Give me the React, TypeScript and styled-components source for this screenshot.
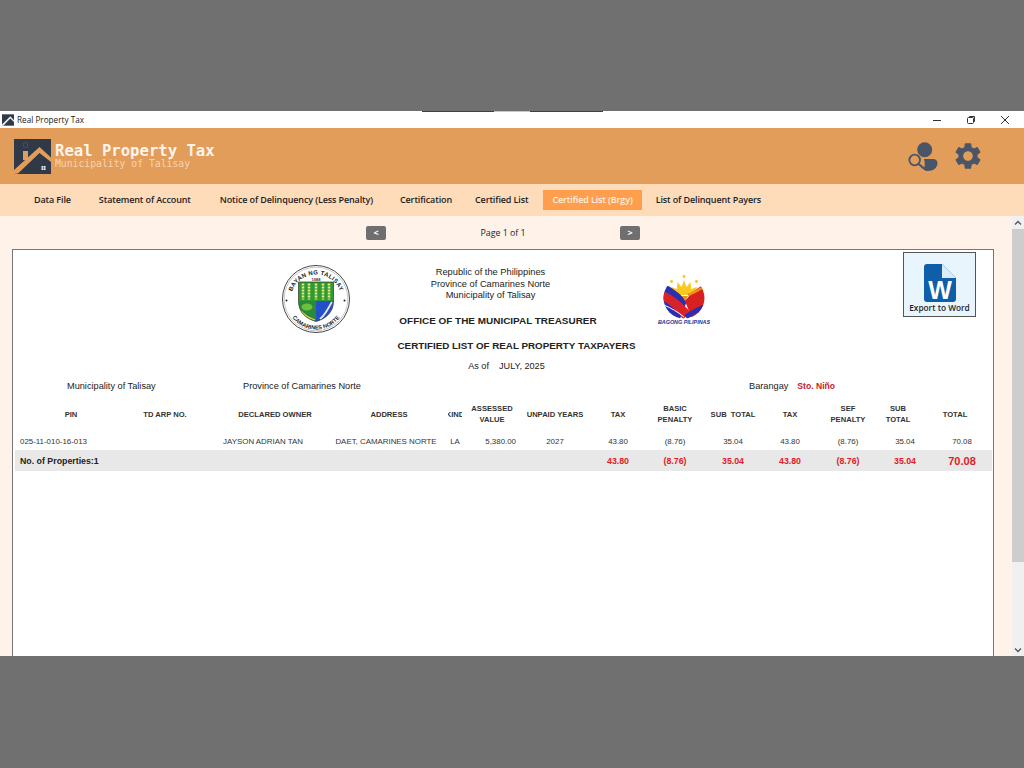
import React from 'react';
import styled, { createGlobalStyle } from 'styled-components';
import { MdSettings } from 'react-icons/md';

const GlobalStyle = createGlobalStyle`
  html, body {
    margin: 0;
    padding: 0;
    background: #707070;
    overflow: hidden;
  }
  * {
    box-sizing: border-box;
  }
`;

const Page = styled.div`
  width: 1024px;
  height: 768px;
  padding-top: 111px;
  background: #707070;
  font-family: "Liberation Sans", Arial, sans-serif;
`;

const AppWindow = styled.div`
  position: relative;
  width: 1024px;
  height: 545px;
  display: flex;
  flex-direction: column;
  overflow: hidden;
`;

const TitleBar = styled.div`
  height: 17px;
  flex: none;
  background: #ffffff;
  display: flex;
  align-items: center;
  padding-left: 2px;
  gap: 3px;
  font-family: "Open Sans", sans-serif;
  font-size: 8.2px;
  color: #222222;
`;

const TitleText = styled.span`
  flex: 1;
`;

const WindowButton = styled.div`
  width: 34px;
  height: 17px;
  display: flex;
  align-items: center;
  justify-content: center;
`;

const TitleControls = styled.div`
  display: flex;
  padding-right: 2px;
`;

const TaskStrip = styled.div`
  position: absolute;
  top: 0;
  left: 422px;
  display: flex;
  height: 1px;
`;

const TaskPiece = styled.div<{ $w: number; $c: string }>`
  width: ${p => p.$w}px;
  background: ${p => p.$c};
`;

const Banner = styled.header`
  height: 56px;
  flex: none;
  background: #e39d5b;
  display: flex;
  align-items: center;
  padding: 0 43px 0 14px;
`;

const BrandText = styled.div`
  margin-left: 4px;
  flex: 1;
  font-family: "DejaVu Sans Mono", monospace;
`;

const BrandTitle = styled.div`
  font-size: 15.6px;
  line-height: 15px;
  font-weight: 700;
  color: #fff4ea;
`;

const BrandSub = styled.div`
  font-size: 9.75px;
  line-height: 9px;
  color: #f7d4b0;
`;

const BannerIcons = styled.div`
  display: flex;
  align-items: center;
  gap: 16px;
  color: #4a5568;
`;

const GearIcon = styled(MdSettings)`
  margin: 0 -3px;
`;

const TabBar = styled.nav`
  height: 32px;
  flex: none;
  background: #fedbb9;
  display: flex;
  align-items: center;
  padding-left: 26px;
`;

const Tab = styled.div<{ $active?: boolean; $gap: number }>`
  height: 20px;
  padding: 0 ${p => (p.$active ? 9 : 8)}px 2px;
  margin-right: ${p => p.$gap}px;
  display: flex;
  align-items: center;
  font-family: "Open Sans", sans-serif;
  font-size: 9px;
  font-weight: 600;
  letter-spacing: -0.12px;
  white-space: nowrap;
  color: ${p => (p.$active ? '#fff1e0' : '#1d1d1d')};
  background: ${p => (p.$active ? '#ff9f4d' : 'transparent')};
`;

const Body = styled.div`
  flex: 1;
  min-height: 0;
  display: flex;
  background: #fff3e9;
`;

const Main = styled.main`
  flex: 1;
  min-width: 0;
  overflow: hidden;
`;

const Pager = styled.div`
  height: 33px;
  display: grid;
  grid-template-columns: 366px 20px 234px 20px;
  align-items: center;
  font-family: "Open Sans", sans-serif;
  font-size: 8.8px;
  color: #222222;
`;

const PagerLabel = styled.div`
  text-align: center;
`;

const PagerButton = styled.div<{ $column: number }>`
  grid-column: ${p => p.$column};
  height: 14px;
  border-radius: 2px;
  background: #6f6f6f;
  color: #ffffff;
  font-size: 9px;
  font-weight: 700;
  display: flex;
  align-items: center;
  justify-content: center;
`;

const Sheet = styled.section`
  position: relative;
  width: 982px;
  height: 600px;
  margin-left: 12px;
  background: #ffffff;
  border: 1px solid #777777;
  padding-left: 2px;
  color: #222222;
`;

const ExportButton = styled.div`
  position: absolute;
  left: 890px;
  top: 2px;
  width: 73px;
  height: 65px;
  background: #e9f5fd;
  border: 1px solid #555555;
  display: flex;
  flex-direction: column;
  align-items: center;
  padding-top: 11px;
  font-family: "Open Sans", sans-serif;
  font-size: 8.3px;
  font-weight: 600;
  line-height: 11px;
  color: #1d1d1d;
  white-space: nowrap;
`;

const Letterhead = styled.div`
  display: flex;
  padding: 14px 0 0 266px;
  height: 90px;
`;

const SealBox = styled.div`
  width: 70px;
  flex: none;
`;

const HeadLines = styled.div`
  width: 279px;
  flex: none;
  padding-top: 3px;
  text-align: center;
  font-size: 9.3px;
  line-height: 11.5px;
`;

const OfficeTitle = styled.div`
  margin-top: 13px;
  padding-left: 15px;
  font-size: 9.95px;
  font-weight: 700;
  white-space: nowrap;
`;

const BagongBox = styled.div`
  margin: 10px 0 0 28px;
`;

const ReportTitle = styled.div`
  margin-top: -1px;
  height: 14px;
  padding-left: 25px;
  text-align: center;
  font-size: 9.8px;
  line-height: 14px;
  font-weight: 700;
`;

const AsOf = styled.div`
  margin-top: 6px;
  height: 14px;
  padding-left: 5px;
  text-align: center;
  font-size: 9.1px;
  line-height: 14px;
  white-space: pre;
`;

const PlaceRow = styled.div`
  margin-top: 6px;
  height: 14px;
  display: grid;
  grid-template-columns: 176px 506px auto;
  padding-left: 52px;
  font-size: 9.2px;
  line-height: 14px;
`;

const BarangayName = styled.span`
  margin-left: 9px;
  color: #c8202c;
  font-size: 8.6px;
  font-weight: 700;
`;

const HeaderRow = styled.div`
  margin-top: 6px;
  height: 30px;
  display: grid;
  grid-template-columns: 102px 86px 134px 94px 38px 36px 90px 36px 78px 38px 76px 40px 60px 54px;
  padding-left: 5px;
`;

const HeaderCell = styled.div`
  display: flex;
  align-items: center;
  justify-content: center;
  min-width: 0;
  text-align: center;
  white-space: nowrap;
  font-size: 7.6px;
  line-height: 11px;
  font-weight: 700;
  color: #333333;
`;

const KindClip = styled.div`
  width: 14px;
  flex: none;
  overflow: hidden;
  display: flex;
  justify-content: center;
`;

const dataColumns = '102px 81px 120px 126px 12px 59px 70px 56px 58px 58px 56px 60px 54px 60px';

const DataRow = styled.div`
  margin-top: 6px;
  height: 13px;
  display: grid;
  grid-template-columns: ${dataColumns};
  padding-left: 5px;
  align-items: center;
  font-size: 7.9px;
  color: #333333;
  white-space: nowrap;
`;

const TotalRow = styled.div`
  margin-top: 2px;
  height: 21px;
  width: 977px;
  display: grid;
  grid-template-columns: ${dataColumns};
  padding-left: 5px;
  align-items: center;
  background: #e8e8e8;
  font-size: 8.8px;
  font-weight: 700;
  white-space: nowrap;
`;

const Cell = styled.div<{ $align?: 'left' | 'right' | 'center'; $red?: boolean; $big?: boolean }>`
  display: flex;
  min-width: 0;
  justify-content: ${p => (p.$align === 'left' ? 'flex-start' : p.$align === 'right' ? 'flex-end' : 'center')};
  padding-right: ${p => (p.$align === 'right' ? '4px' : '0')};
  color: ${p => (p.$red ? '#e01b24' : 'inherit')};
  font-size: ${p => (p.$big ? '11px' : 'inherit')};
`;

const ScrollTrack = styled.div`
  width: 12px;
  flex: none;
  background: #f0f0f0;
  display: flex;
  flex-direction: column;
`;

const ScrollArrow = styled.div`
  height: 13px;
  flex: none;
  display: flex;
  align-items: center;
  justify-content: center;
`;

const ScrollThumb = styled.div`
  height: 333px;
  flex: none;
  background: #cdcdcd;
  margin-bottom: auto;
`;

const LogoIcon = () => (
  <svg width="37" height="35" viewBox="0 0 37 35">
    <rect width="37" height="35" fill="#2f3947" />
    <polygon points="0,31 25.5,8 37,18.5 37,23 25.5,14 4,34.5 0,35" fill="#e39d5b" />
    <rect x="9" y="12" width="5" height="9" fill="#e39d5b" />
    <circle cx="11.5" cy="6" r="2.5" fill="none" stroke="#4b5563" strokeWidth="0.8" />
    <rect x="27.5" y="27" width="4" height="4" fill="#f4f4f4" />
    <path d="M29.5 27v4M27.5 29h4" stroke="#2f3947" strokeWidth="0.5" />
  </svg>
);

const TitleIcon = () => (
  <svg width="12" height="12" viewBox="0 0 37 35">
    <rect width="37" height="35" fill="#2f3947" />
    <polygon points="0,31 25.5,6 37,18 37,24 25.5,13 4,35 0,35" fill="#f0f0f0" />
  </svg>
);

const UserSearchIcon = () => (
  <svg width="32" height="31" viewBox="0 0 32 31">
    <circle cx="17.7" cy="8.7" r="7.5" fill="#4a5568" />
    <path d="M17 18h9c3 0 4.5 2 4.5 4 0 5-4.5 8-9.5 8-2 0-3-.5-4-1.5 1-4 1-7 0-10.5z" fill="#4a5568" />
    <circle cx="7.7" cy="19" r="5.3" fill="none" stroke="#4a5568" strokeWidth="1.8" />
    <path d="M11.7 23l5.5 4.7" stroke="#4a5568" strokeWidth="2.2" strokeLinecap="round" />
  </svg>
);

const WordIcon = () => (
  <svg width="32" height="38" viewBox="0 0 32 38">
    <path d="M3 0h15l14 14v21a3 3 0 0 1-3 3H3a3 3 0 0 1-3-3V3a3 3 0 0 1 3-3z" fill="#0f5fa8" />
    <path d="M18 0l14 14H18z" fill="#dcebf7" />
    <text x="16" y="35" textAnchor="middle" fontFamily="Liberation Sans, sans-serif" fontWeight="700" fontSize="25" fill="#ffffff">W</text>
  </svg>
);

const TalisaySeal = () => (
  <svg width="70" height="70" viewBox="0 0 70 70">
    <defs>
      <path id="sealTop" d="M9.5 36a25.5 25.5 0 0 1 51 0" />
      <path id="sealBottom" d="M5.5 36a29.5 29.5 0 0 0 59 0" />
    </defs>
    <circle cx="35" cy="35" r="33.5" fill="#fff" stroke="#333" strokeWidth="0.9" />
    <circle cx="35" cy="35" r="31.8" fill="none" stroke="#777" strokeWidth="0.4" />
    <text fontFamily="Liberation Sans, sans-serif" fontWeight="700" fontSize="6" letterSpacing="0.3" fill="#222">
      <textPath href="#sealTop" startOffset="50%" textAnchor="middle">BAYAN NG TALISAY</textPath>
    </text>
    <text fontFamily="Liberation Sans, sans-serif" fontWeight="700" fontSize="5.6" fill="#222">
      <textPath href="#sealBottom" startOffset="50%" textAnchor="middle">CAMARINES NORTE</textPath>
    </text>
    <circle cx="5.5" cy="36.5" r="1" fill="#222" />
    <circle cx="63.5" cy="36.5" r="1" fill="#222" />
    <text x="35" y="16.5" textAnchor="middle" fontFamily="Liberation Sans, sans-serif" fontWeight="700" fontSize="4" fill="#333">1988</text>
    <path d="M17.5 18h35v19h-35z" fill="#2f9a35" />
    <path d="M22 19.5v16M28 19.5v16M35 19.5v16M42 19.5v16M48 19.5v16" stroke="#e4e97a" strokeWidth="2.6" strokeDasharray="2 1" />
    <path d="M17.5 37H35v20.5C26 55 17.5 49 17.5 37z" fill="#2a8a3a" />
    <path d="M35 37h17.5c0 12-8.5 18-17.5 20.5z" fill="#2350c8" />
    <ellipse cx="26" cy="43" rx="5.5" ry="3.5" fill="#6fbf3f" />
    <path d="M39 55c6-5 8-11 12-17" stroke="#e6e6e6" strokeWidth="1.8" fill="none" />
    <path d="M20 47c3 4 8 7 14 9" stroke="#e2d94a" strokeWidth="1.3" fill="none" />
    <path d="M17.5 18h35v19c0 12-8.5 18-17.5 20.5C26 55 17.5 49 17.5 37z" fill="none" stroke="#333" strokeWidth="0.7" />
  </svg>
);

const BagongLogo = () => (
  <svg width="54" height="52" viewBox="0 0 54 52">
    <defs>
      <clipPath id="bpDisc">
        <circle cx="26" cy="24" r="20.5" />
      </clipPath>
    </defs>
    <g fill="#f5c518">
      <circle cx="26" cy="2.5" r="1.4" />
      <circle cx="13.5" cy="7.5" r="1.4" />
      <circle cx="38.5" cy="7.5" r="1.4" />
    </g>
    <path d="M26 6l2.5 7 4-5 .5 7 6-2-3 8H16l-3-8 6 2 .5-7 4 5z" fill="#f8c91e" />
    <g clipPath="url(#bpDisc)">
      <path d="M5 10c8 2 17 10 24 17l-7 18H5z" fill="#2a2fb0" />
      <path d="M47 10c-8 4-14 9-20 17l7 18h13z" fill="#d92020" />
      <path d="M5 17c10 4 20 12 28 22l-8 6C18 36 12 30 5 27z" fill="#d8232a" />
      <path d="M6 31c7 3 14 7 20 12" stroke="#ffffff" strokeWidth="1" fill="none" />
      <path d="M28 43c6-4 12-8 19-10" stroke="#2a2fb0" strokeWidth="5" fill="none" />
      <path d="M24 22h6l-3 5z" fill="#f28c1a" />
      <path d="M30 21c5-2 10-5 16-8" stroke="#f28c1a" strokeWidth="2.5" fill="none" />
    </g>
    <text x="26" y="49.5" textAnchor="middle" fontFamily="Liberation Sans, sans-serif" fontWeight="700" fontStyle="italic" fontSize="5.4" fill="#23308f">BAGONG PILIPINAS</text>
  </svg>
);

const tabs = [
  { label: 'Data File', gap: 12 },
  { label: 'Statement of Account', gap: 13 },
  { label: 'Notice of Delinquency (Less Penalty)', gap: 11 },
  { label: 'Certification', gap: 7 },
  { label: 'Certified List', gap: 7 },
  { label: 'Certified List (Brgy)', gap: 6, active: true },
  { label: 'List of Delinquent Payers', gap: 0 },
];

const amounts = ['43.80', '(8.76)', '35.04', '43.80', '(8.76)', '35.04', '70.08'];

export default function App() {
  return (
    <Page>
      <GlobalStyle />
      <AppWindow>
        <TaskStrip>
          <TaskPiece $w={72} $c="#3f3f3f" />
          <TaskPiece $w={36} $c="#9fd3f0" />
          <TaskPiece $w={73} $c="#3f3f3f" />
        </TaskStrip>
        <TitleBar>
          <TitleIcon />
          <TitleText>Real Property Tax</TitleText>
          <TitleControls>
            <WindowButton>
              <svg width="10" height="10" viewBox="0 0 10 10"><path d="M1 5.5h8" stroke="#333" /></svg>
            </WindowButton>
            <WindowButton>
              <svg width="10" height="10" viewBox="0 0 10 10">
                <rect x="1.5" y="2.5" width="6" height="6" rx="1" fill="none" stroke="#333" />
                <path d="M3.5 2.5V1.5h5v5H7.5" fill="none" stroke="#333" />
              </svg>
            </WindowButton>
            <WindowButton>
              <svg width="10" height="10" viewBox="0 0 10 10"><path d="M1 1l8 8M9 1l-8 8" stroke="#333" /></svg>
            </WindowButton>
          </TitleControls>
        </TitleBar>

        <Banner>
          <LogoIcon />
          <BrandText>
            <BrandTitle>Real Property Tax</BrandTitle>
            <BrandSub>Municipality of Talisay</BrandSub>
          </BrandText>
          <BannerIcons>
            <UserSearchIcon />
            <GearIcon size={32} />
          </BannerIcons>
        </Banner>

        <TabBar>
          {tabs.map(t => (
            <Tab key={t.label} $active={t.active} $gap={t.gap}>{t.label}</Tab>
          ))}
        </TabBar>

        <Body>
          <Main>
            <Pager>
              <PagerButton $column={2}>&lt;</PagerButton>
              <PagerLabel>Page 1 of 1</PagerLabel>
              <PagerButton $column={4}>&gt;</PagerButton>
            </Pager>
            <Sheet>
              <ExportButton>
                <WordIcon />
                Export to Word
              </ExportButton>
              <Letterhead>
                <SealBox><TalisaySeal /></SealBox>
                <HeadLines>
                  <div>Republic of the Philippines</div>
                  <div>Province of Camarines Norte</div>
                  <div>Municipality of Talisay</div>
                  <OfficeTitle>OFFICE OF THE MUNICIPAL TREASURER</OfficeTitle>
                </HeadLines>
                <BagongBox><BagongLogo /></BagongBox>
              </Letterhead>
              <ReportTitle>CERTIFIED LIST OF REAL PROPERTY TAXPAYERS</ReportTitle>
              <AsOf>As of    JULY, 2025</AsOf>
              <PlaceRow>
                <span>Municipality of Talisay</span>
                <span>Province of Camarines Norte</span>
                <span>Barangay<BarangayName>Sto. Niño</BarangayName></span>
              </PlaceRow>
              <HeaderRow>
                <HeaderCell>PIN</HeaderCell>
                <HeaderCell>TD ARP NO.</HeaderCell>
                <HeaderCell>DECLARED OWNER</HeaderCell>
                <HeaderCell>ADDRESS</HeaderCell>
                <HeaderCell><KindClip>KIND</KindClip></HeaderCell>
                <HeaderCell>ASSESSED<br />VALUE</HeaderCell>
                <HeaderCell>UNPAID YEARS</HeaderCell>
                <HeaderCell>TAX</HeaderCell>
                <HeaderCell>BASIC<br />PENALTY</HeaderCell>
                <HeaderCell>SUB&nbsp; TOTAL</HeaderCell>
                <HeaderCell>TAX</HeaderCell>
                <HeaderCell>SEF<br />PENALTY</HeaderCell>
                <HeaderCell>SUB<br />TOTAL</HeaderCell>
                <HeaderCell>TOTAL</HeaderCell>
              </HeaderRow>
              <DataRow>
                <Cell $align="left">025-11-010-16-013</Cell>
                <Cell />
                <Cell>JAYSON ADRIAN TAN</Cell>
                <Cell>DAET, CAMARINES NORTE</Cell>
                <Cell>LA</Cell>
                <Cell $align="right">5,380.00</Cell>
                <Cell>2027</Cell>
                {amounts.map((a, i) => (
                  <Cell key={i}>{a}</Cell>
                ))}
              </DataRow>
              <TotalRow>
                <Cell $align="left">No. of Properties:1</Cell>
                <Cell />
                <Cell />
                <Cell />
                <Cell />
                <Cell />
                <Cell />
                {amounts.map((a, i) => (
                  <Cell key={i} $red $big={i === amounts.length - 1}>{a}</Cell>
                ))}
              </TotalRow>
            </Sheet>
          </Main>
          <ScrollTrack>
            <ScrollArrow>
              <svg width="8" height="6" viewBox="0 0 8 6"><path d="M1 4.5l3-3 3 3" fill="none" stroke="#555" strokeWidth="1.3" /></svg>
            </ScrollArrow>
            <ScrollThumb />
            <ScrollArrow>
              <svg width="8" height="6" viewBox="0 0 8 6"><path d="M1 1.5l3 3 3-3" fill="none" stroke="#555" strokeWidth="1.3" /></svg>
            </ScrollArrow>
          </ScrollTrack>
        </Body>
      </AppWindow>
    </Page>
  );
}
